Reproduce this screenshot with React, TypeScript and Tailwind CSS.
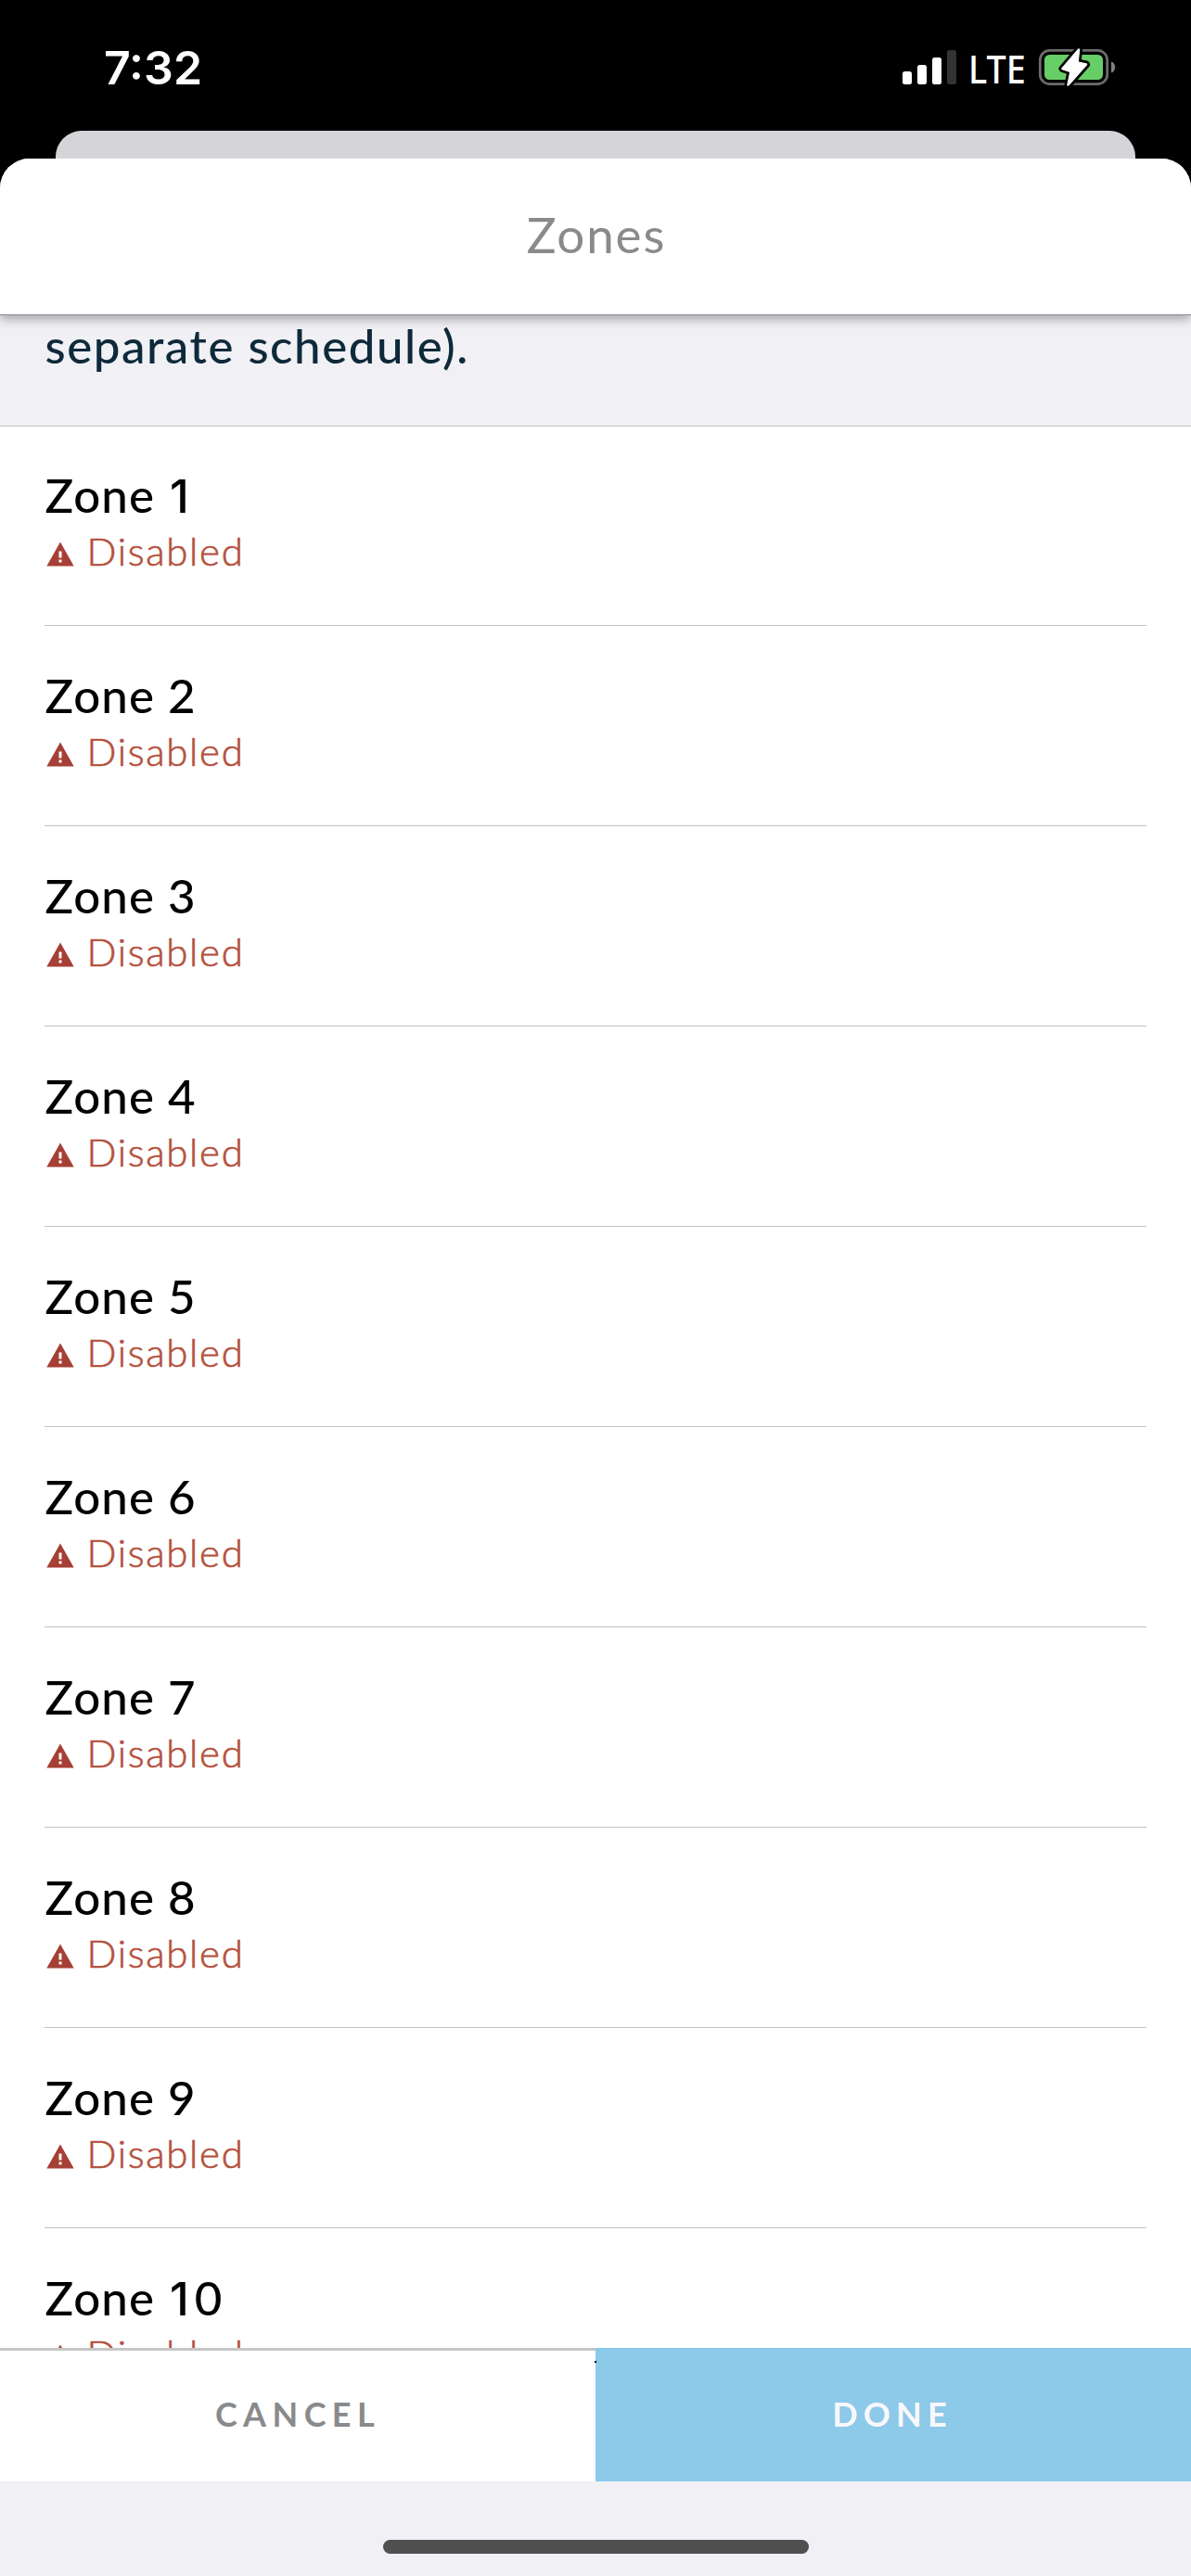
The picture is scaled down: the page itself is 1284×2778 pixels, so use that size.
const zones = Array.from({ length: 10 }, (_, i) => i + 1);

function StatusBar() {
  return (
    <div className="flex h-[141px] shrink-0 items-start justify-between bg-black pl-[112px] pr-[81px] text-white">
      <div className="mt-[43px] font-['Inter',sans-serif] text-[50px] font-semibold leading-[60px]">7:32</div>
      <div className="mt-[50px] flex items-start">
        <svg className="mt-1" width="58" height="37" viewBox="0 0 58 37" fill="#fff">
          <rect x="0" y="23" width="10" height="14" rx="2.5" />
          <rect x="16" y="16" width="10" height="21" rx="2.5" />
          <rect x="32" y="8" width="10" height="29" rx="2.5" />
          <rect x="48" y="0" width="10" height="37" rx="2.5" fill="#333" />
        </svg>
        <span className="-mt-[5px] ml-[13px] w-[62px] origin-left scale-x-90 font-['Noto_Sans',sans-serif] text-[42px] font-medium leading-[57px]">
          LTE
        </span>
        <svg className="ml-[13px]" width="84" height="46" viewBox="1119 50 84 46">
          <rect x="1121.3" y="54.3" width="72.4" height="36.4" rx="10.5" fill="none" stroke="#6b6b6b" strokeWidth="2.8" />
          <rect x="1126" y="59" width="63" height="27" rx="5.5" fill="#67ce67" />
          <path d="M1198 66.5c2.6.8 4.2 3 4.2 6s-1.6 5.2-4.2 6z" fill="#808080" />
          <g strokeLinejoin="round">
            <path d="M1163 53.5L1145.5 74L1154.500 77L1151.5 91.5L1171 69.5L1161.5 67.5Z" fill="#000" stroke="#000" strokeWidth="8" />
            <path d="M1163 53.5L1145.5 74L1154.500 77L1151.5 91.5L1171 69.5L1161.5 67.5Z" fill="#fff" stroke="#fff" strokeWidth="2.5" />
          </g>
        </svg>
      </div>
    </div>
  );
}

function WarningIcon() {
  return (
    <svg width="30" height="27" viewBox="0 0 30 27">
      <path d="M15 0.5L29.7 26.5H0.3Z" fill="#a63f35" />
      <path d="M13.5 10.5h3v7h-3zM13.5 19.500h3v3h-3z" fill="#fff" />
    </svg>
  );
}

function ZoneRow({ n }: { n: number }) {
  return (
    <div className="mx-[48px] flex h-[216px] shrink-0 flex-col border-b border-[#c2c2c4] pt-[45px]">
      <div className="pl-[0.5px] text-[51px] font-medium leading-[60px] tracking-[1.1px] text-black">
        Zone{' '}
        {String(n)
          .split('')
          .map((d, i) =>
            d === '1' ? (
              <span key={i} className="ml-[2px] mr-[5px] font-['Inter',sans-serif] text-[50px] leading-none">
                1
              </span>
            ) : (
              <span key={i}>{d}</span>
            ),
          )}
      </div>
      <div className="mt-[5px] flex items-start">
        <div className="ml-[1.5px] mt-[15px]">
          <WarningIcon />
        </div>
        <span className="ml-[14px] text-[42px] font-light leading-[50px] tracking-[1.7px] text-[#b5523f] [-webkit-text-stroke:0.7px_#b5523f]">
          Disabled
        </span>
      </div>
    </div>
  );
}

export default function App() {
  return (
    <div className="flex h-[2778px] w-[1284px] flex-col overflow-hidden bg-black font-['Lato',sans-serif]">
      <StatusBar />
      <div className="mx-[60px] h-[30px] shrink-0 rounded-t-[28px] bg-[#d5d4d9]" />
      <div className="flex min-h-0 grow flex-col overflow-hidden rounded-t-[32px] bg-[#f0f0f5]">
        <header className="z-10 h-[169px] shrink-0 border-b border-[#8a8a8d] bg-white pl-[2px] pt-[50px] text-center text-[53px] leading-[64px] tracking-[1.9px] text-[#8a8a8c] shadow-[0_4px_11px_rgba(0,0,0,0.32)]">
          Zones
        </header>
        <main className="flex min-h-0 grow flex-col overflow-hidden bg-white">
          <div className="h-[120px] shrink-0 border-b border-[#c2c2c4] bg-[#f0f0f5] pl-[48.5px] pt-[3px] text-[51px] font-medium leading-[60px] tracking-[1.55px] text-[#0e293a]">
            separate schedule).
          </div>
          <div className="-mt-px flex flex-col">
            {zones.map((n) => (
              <ZoneRow key={n} n={n} />
            ))}
          </div>
        </main>
        <div className="relative flex h-[144px] shrink-0 text-[36px] font-bold leading-[44px]">
          <button className="h-full w-[642px] border-t-[3px] border-[#c6c6c6] bg-white pb-[5px] tracking-[6.4px] text-[#8a8a8c]">
            CANCEL
          </button>
          <button className="h-full w-[642px] bg-[#8dc9e8] pb-[2px] pr-[2px] tracking-[6.2px] text-[#f8f8fc]">
            DONE
          </button>
          <i className="absolute left-[641px] top-[14px] size-[2px] bg-black" />
        </div>
        <div className="flex h-[102px] shrink-0 justify-center bg-[#f0f0f5] pt-[63px]">
          <div className="h-[15px] w-[459px] rounded-full bg-[#505050]" />
        </div>
      </div>
    </div>
  );
}
